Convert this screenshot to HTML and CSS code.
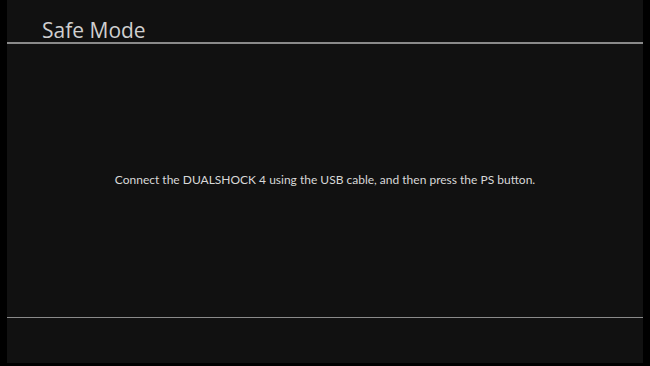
FILE: index.html
```html
<!DOCTYPE html>
<html>
<head>
<meta charset="utf-8">
<link rel="stylesheet" href="styles.css">
</head>
<body>
<div class="screen">
  <header class="head">
    <h1 class="title">Safe Mode</h1>
  </header>
  <main class="content">
    <p class="message">Connect the DUALSHOCK 4 using the USB cable, and then press the PS button.</p>
  </main>
  <footer class="foot"></footer>
</div>
</body>
</html>
```

FILE: styles.css
```css
html, body {
  margin: 0;
  padding: 0;
  background: #000;
  width: 650px;
  height: 366px;
  overflow: hidden;
}
.screen {
  margin-left: 7px;
  width: 636px;
  height: 363px;
  background: #111111;
  display: flex;
  flex-direction: column;
  font-family: "Open Sans", "Noto Sans", sans-serif;
}
.head {
  height: 42px;
  border-bottom: 2px solid #8a8a8a;
  display: flex;
  align-items: flex-end;
  box-sizing: content-box;
}
.title {
  margin: 0 0 -1px 35px;
  font-size: 21px;
  font-weight: 400;
  color: #cfcfcf;
  line-height: 26px;
}
.content {
  height: 273px;
  border-bottom: 1px solid #8a8a8a;
  display: flex;
  justify-content: center;
  align-items: center;
}
.message {
  margin: 0 0 2px 0;
  font-family: "Lato", "Open Sans", sans-serif;
  font-size: 12px;
  color: #d8d8d8;
  line-height: 16px;
}
.foot {
  flex: 1;
}
```
